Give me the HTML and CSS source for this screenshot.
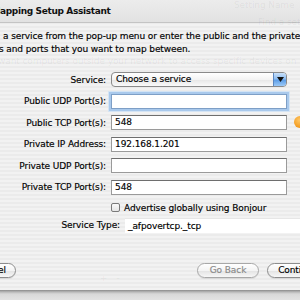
FILE: index.html
```html
<!DOCTYPE html>
<html>
<head>
<meta charset="utf-8">
<link rel="stylesheet" href="styles.css">
</head>
<body>
<div class="screen">
  <div class="ghost" aria-hidden="true">
    <span class="g g-search">Setting Name</span>
    <span class="g g-find">Find a setting</span>
    <span class="g g-l1">want computers outside your network to access specific devices on</span>
    <span class="g g-pm">+&nbsp;&nbsp;&nbsp;–</span>
  </div>

  <div class="sheet">
    <div class="titlebar"><span class="title">Mapping Setup Assistant</span></div>

    <div class="intro">
      <div class="line1">a service from the pop-up menu or enter the public and the private</div>
      <div class="line2">s and ports that you want to map between.</div>
    </div>

    <div class="form">
      <label class="lbl">Service:</label>
      <div class="popup">
        <span class="popup-text">Choose a service</span>
        <span class="popup-arrow"><svg width="7" height="5" viewBox="0 0 7 5"><path d="M0 0H7L3.5 5Z" fill="#111"/></svg></span>
      </div>

      <label class="lbl">Public UDP Port(s):</label>
      <div class="field focus"></div>

      <label class="lbl">Public TCP Port(s):</label>
      <div class="field-wrap">
        <div class="field">548</div>
        <span class="warn"></span>
      </div>

      <label class="lbl">Private IP Address:</label>
      <div class="field">192.168.1.201</div>

      <label class="lbl">Private UDP Port(s):</label>
      <div class="field"></div>

      <label class="lbl">Private TCP Port(s):</label>
      <div class="field">548</div>
    </div>

    <div class="check-row">
      <span class="checkbox"></span>
      <span class="check-label">Advertise globally using Bonjour</span>
    </div>

    <div class="type-row">
      <span class="type-label">Service Type:</span>
      <div class="type-field">_afpovertcp._tcp</div>
    </div>

    <div class="buttons">
      <div class="btn cancel">Cancel</div>
      <div class="spacer"></div>
      <div class="btn back">Go Back</div>
      <div class="btn cont">Continue</div>
    </div>
  </div>
  <div class="sheet-edge"></div>
</div>
</body>
</html>
```

FILE: styles.css
```css
* { box-sizing: border-box; }
html, body { margin: 0; padding: 0; }
body {
  width: 300px;
  height: 300px;
  overflow: hidden;
  font-family: "DejaVu Sans", "Liberation Sans", sans-serif;
  font-size: 9px;
  letter-spacing: -0.1px;
  color: #000;
  -webkit-text-stroke: 0.15px currentColor;
  background: repeating-linear-gradient(#e4e4e4 0 2px, #dcdcdc 2px 4px);
}

.screen {
  position: relative;
  width: 300px;
  height: 300px;
  overflow: hidden;
}

/* background window seen faintly through the translucent sheet */
.ghost {
  position: absolute;
  inset: 0;
  z-index: 2;
  pointer-events: none;
  color: rgba(0, 0, 0, 0.06);
  -webkit-text-stroke: 0;
}
.g { position: absolute; white-space: nowrap; }
.g-search { left: 234px; top: 0px; }
.g-find { left: 258px; top: 17px; }
.g-l1 { left: -2px; top: 56px; }
.g-pm { left: 100px; top: 273px; }

.sheet {
  position: relative;
  z-index: 1;
  height: 290px;
  background: repeating-linear-gradient(#f2f2f2 0 2px, #ebebeb 2px 4px);
  display: flex;
  flex-direction: column;
}

.titlebar {
  height: 23px;
  background: linear-gradient(#ececec, #e2e2e2);
  border-bottom: 1px solid #c4c4c4;
  white-space: nowrap;
}
.title {
  display: block;
  margin-left: -8.6px;
  font-weight: bold;
  font-size: 9px;
  letter-spacing: -0.35px;
  line-height: 22px;
  color: #111;
  -webkit-text-stroke: 0;
}

.intro {
  margin-top: 7px;
  line-height: 13px;
  white-space: nowrap;
}
.line1 { margin-left: 3px; }
.line2 { margin-left: -1px; }

.form {
  margin-top: 16px;
  margin-left: 4px;
  display: grid;
  grid-template-columns: 102px 176px;
  column-gap: 5px;
  row-gap: 6.5px;
  align-items: center;
}
.lbl {
  text-align: right;
  white-space: nowrap;
}

.popup {
  height: 15px;
  display: flex;
  border: 1px solid #8a8a8a;
  border-radius: 4px;
  background: linear-gradient(#ffffff, #f3f3f3 50%, #e6e6e6 51%, #fafafa);
  overflow: hidden;
}
.popup-text {
  flex: 1;
  padding-left: 4px;
  line-height: 13px;
}
.popup-arrow {
  width: 13px;
  display: flex;
  align-items: center;
  justify-content: center;
  border-left: 1px solid #5b86c0;
  background: linear-gradient(#c9e0f8, #8dbcf0 45%, #5d9ee8 55%, #9cc9f6);
}

.field {
  height: 15px;
  background: #fff;
  border: 1px solid #9a9a9a;
  border-top-color: #6e6e6e;
  padding-left: 3px;
  line-height: 13px;
}
.field.focus {
  border-color: #7e9fc6;
  box-shadow: 0 0 0 2px #a9c9ec, 0 0 0 3px #d4e4f4;
}
.field-wrap {
  position: relative;
}
.warn {
  position: absolute;
  left: 183px;
  top: 1px;
  width: 12px;
  height: 12px;
  border-radius: 50%;
  background: radial-gradient(circle at 45% 35%, #ffc766, #f39a1d 70%, #e28510);
}

.check-row {
  margin-top: 8px;
  margin-left: 111px;
  display: flex;
  align-items: center;
  gap: 4px;
  height: 10px;
}
.checkbox {
  width: 9px;
  height: 9px;
  border: 1px solid #7a7a7a;
  border-radius: 2px;
  background: linear-gradient(#fafafa, #e6e6e6);
}
.check-label { white-space: nowrap; }

.type-row {
  margin-top: 5px;
  display: flex;
  align-items: center;
  white-space: nowrap;
}
.type-label {
  width: 120px;
  text-align: right;
}
.type-field {
  margin-left: 5px;
  flex: 1;
  height: 15px;
  background: #fff;
  border-top: 1px solid #e6e6e6;
  padding-left: 3px;
  line-height: 14px;
}

.buttons {
  margin-top: 30px;
  display: flex;
  align-items: center;
  height: 15px;
  white-space: nowrap;
}
.btn {
  height: 15px;
  border: 1px solid #8d8d8d;
  border-radius: 8px;
  background: linear-gradient(#ffffff, #f4f4f4 50%, #e4e4e4 55%, #f7f7f7);
  line-height: 13px;
  text-align: center;
  box-shadow: 0 1px 0 rgba(0,0,0,0.08);
}
.cancel {
  width: 50px;
  margin-left: -34px;
}
.spacer { flex: 1; }
.back {
  width: 62px;
  color: #8a8a8a;
  border-color: #a8a8a8;
}
.cont {
  width: 62px;
  margin-left: 8px;
  margin-right: -29px;
}

.sheet-edge {
  height: 10px;
  background: linear-gradient(#8a8a8a, #b8b8b8 2px, #d8d8d8 4px, #e2e2e2);
}
```
